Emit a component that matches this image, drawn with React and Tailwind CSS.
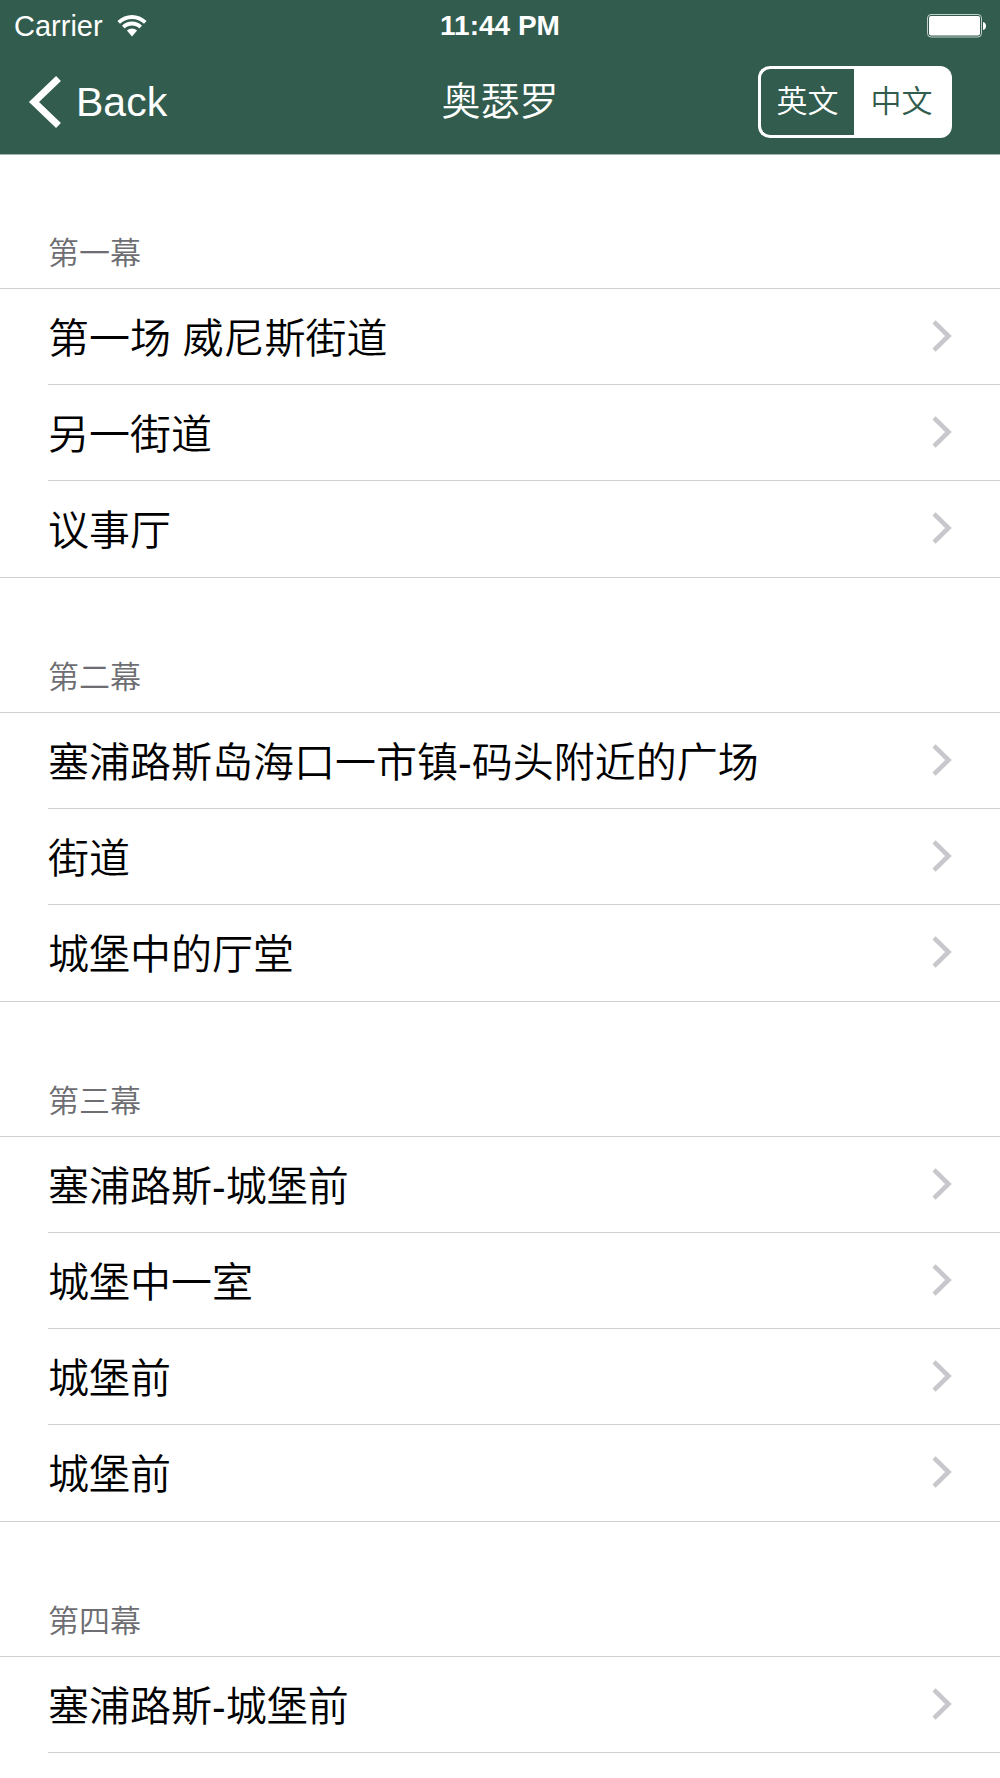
import React, {useState} from 'react';

const acts = [
	{
		id: 1,
		title: "第一幕",
		scenes: ["第一场 威尼斯街道", "另一街道", "议事厅"],
	},
	{
		id: 2,
		title: "第二幕",
		scenes: ["塞浦路斯岛海口一市镇-码头附近的广场", "街道", "城堡中的厅堂"],
	},
	{
		id: 3,
		title: "第三幕",
		scenes: ["塞浦路斯-城堡前", "城堡中一室", "城堡前", "城堡前"],
	},
	{
		id: 4,
		title: "第四幕",
		scenes: ["塞浦路斯-城堡前"],
		hasMore: true,
	},
]

const WifiIcon = () => (
	<svg width="30" height="22" viewBox="0 0 30 22" fill="white" aria-hidden="true">
		<path d="M0.4 6C8.5 -2 21.5 -2 29.6 6L27 8.7C20.3 2.3 9.7 2.3 3 8.7Z" />
		<path d="M5 10.7C10.6 5.2 19.4 5.2 25 10.7L22.3 13.4C18.2 9.6 11.8 9.6 7.7 13.4Z" />
		<path d="M9.9 15.6C12.8 12.8 17.2 12.8 20.1 15.6L15 21.4Z" />
	</svg>
)

const BatteryIcon = () => (
	<svg width="59" height="24" viewBox="0 0 59 24" aria-hidden="true">
		<rect x="0.5" y="0.5" width="54" height="22.5" rx="3.5" fill="none" stroke="white" strokeOpacity="0.7" />
		<rect x="2" y="2" width="51" height="19.5" rx="2" fill="white" />
		<path d="M56 8C58.2 8.6 59 10 59 12C59 14 58.2 15.4 56 16Z" fill="white" />
	</svg>
)

const StatusBar = () => (
	<div className="grid grid-cols-[1fr_auto_1fr] items-center h-13 px-3.5 leading-8">
		<div className="flex items-center gap-3.5 text-[29px]">
			<span>Carrier</span>
			<WifiIcon />
		</div>
		<span className="text-[28px] font-bold">11:44 PM</span>
		<div className="flex justify-end">
			<BatteryIcon />
		</div>
	</div>
)

const NavBar = ({lang, onChange}) => (
	<div className="grid grid-cols-[1fr_auto_1fr] items-center h-[102px] px-7 pb-0.5">
		<a href="#back" className="flex items-center gap-3.5 text-[41px] leading-12">
			<svg width="34" height="54" viewBox="0 0 34 54" fill="none" stroke="white" strokeWidth="7" aria-hidden="true">
				<path d="M30.5 3.5L6 27L30.5 50.5" />
			</svg>
			Back
		</a>
		<h1 className="text-[39px] leading-12 font-[350]">奥瑟罗</h1>
		<div className="flex justify-self-end mr-5 h-18 text-[31px] font-[350]">
			{["英文", "中文"].map((label) => (
				<button
					key={label}
					type="button"
					aria-pressed={lang === label}
					onClick={() => onChange(label)}
					className={`w-24 border-3 border-white whitespace-nowrap first:rounded-l-xl first:border-r-0 last:rounded-r-xl last:border-l-0 last:w-[98px] ${lang === label ? "bg-white text-[#325c4d]" : "text-white"}`}
				>
					{label}
				</button>
			))}
		</div>
	</div>
)

const SceneRow = ({title, divider}) => (
	<li className="pl-12">
		<a
			href="#scene"
			className={`flex items-center justify-between h-24 pr-12 ${divider ? "border-b border-[#d0d0d3]" : ""}`}
		>
			<span className="pt-1 text-[41px] leading-12">{title}</span>
			<svg width="20" height="32" viewBox="0 0 20 32" fill="none" stroke="#c7c7cc" strokeWidth="4.6" className="shrink-0 mb-0.5" aria-hidden="true">
				<path d="M2 1.8L16.5 16L2 30.2" />
			</svg>
		</a>
	</li>
)

const App = () => {
	const [lang, setLang] = useState("中文")
	
	return (
		<div className="min-h-screen bg-white text-black font-['Liberation_Sans','Noto_Sans_CJK_SC',sans-serif]">
			<header className="bg-[#325c4d] text-white shadow-[0_1px_0_#a3b5ae]">
				<StatusBar />
				<NavBar lang={lang} onChange={setLang} />
			</header>
			
			{/* Acts and their scenes */}
			<main>
				{acts.map((act) => (
					<section key={act.id}>
						<h2 className="flex items-end h-[134px] pl-12 pb-3.5 text-[31px] leading-10 font-[350] text-[#6d6d72]">
							{act.title}
						</h2>
						<ul className={`border-t border-[#d0d0d3] font-[350] ${act.hasMore ? "" : "border-b"}`}>
							{act.scenes.map((scene, i) => (
								<SceneRow
									key={i}
									title={scene}
									divider={act.hasMore || i < act.scenes.length - 1}
								/>
							))}
						</ul>
					</section>
				))}
			</main>
		</div>
	);
};

export default App;
